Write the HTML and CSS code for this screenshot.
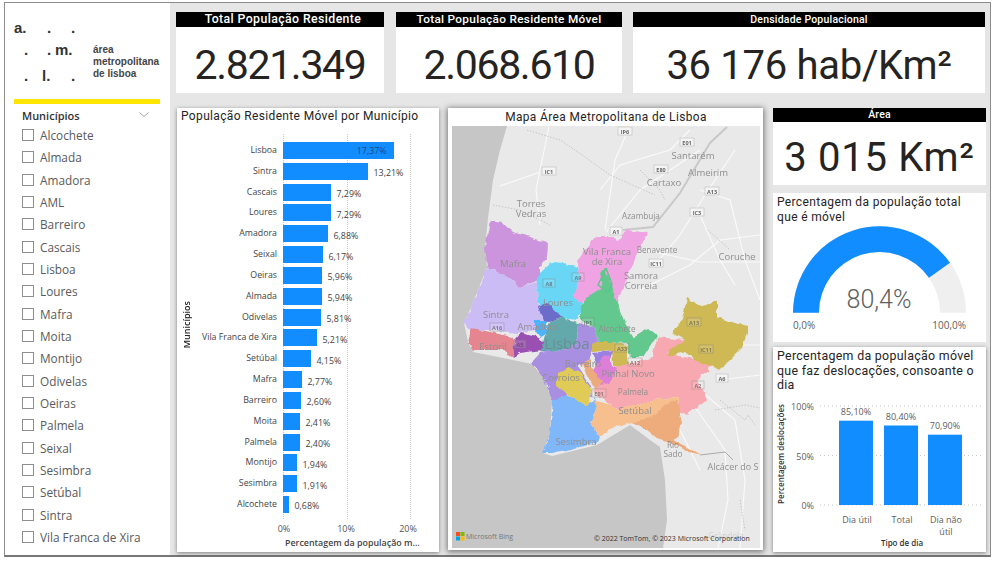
FILE: index.html
```html
<!DOCTYPE html>
<html lang="pt">
<head>
<meta charset="utf-8">
<title>Área Metropolitana de Lisboa</title>
<link rel="stylesheet" href="styles.css">
</head>
<body>
<div class="frame">
  <aside class="side">
    <div class="logo">
      <div class="logo-marks">
        <div class="lrow r1"><b class="a">a.</b><b class="d1">.</b><b class="d2">.</b></div>
        <div class="lrow r2"><b class="d0">.</b><b class="d1">.</b><b class="m">m.</b></div>
        <div class="lrow r3"><b class="d0">.</b><b class="l">l.</b><b class="d2">.</b></div>
      </div>
      <div class="logo-text">área<br>metropolitana<br>de lisboa</div>
    </div>
    <div class="yellow"></div>
    <div class="slicer-head"><span>Municípios</span>
      <svg class="chev" width="10" height="5" viewBox="0 0 10 5"><path d="M.5.5 5 4.5 9.5.5" fill="none" stroke="#888" stroke-width=".8"/></svg>
    </div>
    <ul class="slicer">
      <li><i></i>Alcochete</li><li><i></i>Almada</li><li><i></i>Amadora</li><li><i></i>AML</li>
      <li><i></i>Barreiro</li><li><i></i>Cascais</li><li><i></i>Lisboa</li><li><i></i>Loures</li>
      <li><i></i>Mafra</li><li><i></i>Moita</li><li><i></i>Montijo</li><li><i></i>Odivelas</li>
      <li><i></i>Oeiras</li><li><i></i>Palmela</li><li><i></i>Seixal</li><li><i></i>Sesimbra</li>
      <li><i></i>Setúbal</li><li><i></i>Sintra</li><li><i></i>Vila Franca de Xira</li>
    </ul>
  </aside>
  <main class="main">
    <section class="kpis">
      <div class="kpi k1"><h2 class="kh big">Total População Residente</h2><div class="kv">2.821.349</div></div>
      <div class="kpi k2"><h2 class="kh big">Total População Residente Móvel</h2><div class="kv">2.068.610</div></div>
      <div class="kpi k3"><h2 class="kh">Densidade Populacional</h2><div class="kv wide">36 176 hab/Km²</div></div>
    </section>
    <section class="content">
      <div class="card chart">
        <h3 class="title">População Residente Móvel por Município</h3>
        <div class="ytitle">Municípios</div>
        <div class="plot">
          <span class="gl g0"></span><span class="gl g1"></span><span class="gl g2"></span>
          <div class="row"><span class="cat">Lisboa</span><span class="bar" style="width:110.7px"><em>17,37%</em></span></div>
          <div class="row"><span class="cat">Sintra</span><span class="bar" style="width:84.5px"></span><span class="val">13,21%</span></div>
          <div class="row"><span class="cat">Cascais</span><span class="bar" style="width:47.5px"></span><span class="val">7,29%</span></div>
          <div class="row"><span class="cat">Loures</span><span class="bar" style="width:47.5px"></span><span class="val">7,29%</span></div>
          <div class="row"><span class="cat">Amadora</span><span class="bar" style="width:44.5px"></span><span class="val">6,88%</span></div>
          <div class="row"><span class="cat">Seixal</span><span class="bar" style="width:39.5px"></span><span class="val">6,17%</span></div>
          <div class="row"><span class="cat">Oeiras</span><span class="bar" style="width:38.5px"></span><span class="val">5,96%</span></div>
          <div class="row"><span class="cat">Almada</span><span class="bar" style="width:38.5px"></span><span class="val">5,94%</span></div>
          <div class="row"><span class="cat">Odivelas</span><span class="bar" style="width:37.5px"></span><span class="val">5,81%</span></div>
          <div class="row"><span class="cat">Vila Franca de Xira</span><span class="bar" style="width:33.5px"></span><span class="val">5,21%</span></div>
          <div class="row"><span class="cat">Setúbal</span><span class="bar" style="width:27.5px"></span><span class="val">4,15%</span></div>
          <div class="row"><span class="cat">Mafra</span><span class="bar" style="width:18.5px"></span><span class="val">2,77%</span></div>
          <div class="row"><span class="cat">Barreiro</span><span class="bar" style="width:17.5px"></span><span class="val">2,60%</span></div>
          <div class="row"><span class="cat">Moita</span><span class="bar" style="width:16.5px"></span><span class="val">2,41%</span></div>
          <div class="row"><span class="cat">Palmela</span><span class="bar" style="width:16.5px"></span><span class="val">2,40%</span></div>
          <div class="row"><span class="cat">Montijo</span><span class="bar" style="width:13.5px"></span><span class="val">1,94%</span></div>
          <div class="row"><span class="cat">Sesimbra</span><span class="bar" style="width:13.5px"></span><span class="val">1,91%</span></div>
          <div class="row"><span class="cat">Alcochete</span><span class="bar" style="width:5.5px"></span><span class="val">0,68%</span></div>
        </div>
        <div class="xticks"><span>0%</span><span>10%</span><span>20%</span></div>
        <div class="xtitle">Percentagem da população m...</div>
      </div>

      <div class="card mapcard">
        <h3 class="maptitle">Mapa Área Metropolitana de Lisboa</h3>
        <svg class="map" width="308" height="422" viewBox="452 126 308 422">
          <defs>
            <filter id="rough" x="452" y="126" width="308" height="422" filterUnits="userSpaceOnUse">
              <feTurbulence type="fractalNoise" baseFrequency=".13" numOctaves="2" seed="4" result="n"/>
              <feDisplacementMap in="SourceGraphic" in2="n" scale="5" xChannelSelector="R" yChannelSelector="G"/>
              <feGaussianBlur stdDeviation=".35"/>
            </filter>
            <filter id="soft" x="452" y="126" width="308" height="422" filterUnits="userSpaceOnUse">
              <feGaussianBlur stdDeviation=".3"/>
            </filter>
          </defs>
          <rect x="452" y="126" width="308" height="422" fill="#e9e9e9"/>
          <path d="M452 126H507L500 150 493 180 488 218 485 247 487 267 473 303 464 323 468 342 473 352 513 360 532 364 543 377 552 400 550 433 543 453 552 456 597 445 630 425 650 440 660 447 665 480 667 520 663 548H452Z" fill="#c6c6c6" filter="url(#soft)"/>
          <g fill="none" stroke="#fafafa" stroke-width="1.1" filter="url(#soft)">
            <path d="M549 127 540 170 536 190 540 225"/><path d="M630 126 615 160 605 230"/>
            <path d="M540 172 500 186"/><path d="M600 190 620 165 670 150 690 130"/>
            <path d="M606 232 640 190 700 150"/><path d="M655 265 680 235 705 195 735 150"/>
            <path d="M640 290 690 265 720 240 760 235"/><path d="M700 215 720 260 735 285"/>
            <path d="M700 190 730 200 745 260 760 300"/><path d="M645 250 700 262 760 262"/>
            <path d="M700 390 735 420 745 480 740 548"/><path d="M720 380 760 375"/><path d="M690 400 725 450 728 500 718 548"/>
            <path d="M675 420 700 470"/><path d="M700 345 760 345"/>
          </g>
          <g fill="none" stroke="#bcbcbc" stroke-width=".8" stroke-dasharray="1.5 1.5">
            <path d="M527 130 560 140 575 150 610 175 655 195"/><path d="M493 205 520 210 550 225"/>
            <path d="M640 170 660 190 665 200"/><path d="M708 230 730 250"/><path d="M715 410 745 405 760 408"/>
            <path d="M720 400 745 420 748 415 755 425"/><path d="M740 500 745 530"/>
          </g>
          <path d="M623 230 653 227 680 193 710 143 727 127" fill="none" stroke="#c8c8c8" stroke-width="2" filter="url(#soft)"/>
          <path d="M700 455 725 452 733 460" fill="none" stroke="#aaa" stroke-width="1"/>

          <g filter="url(#rough)">
          <path fill="#cb94dd" d="M490 220 502 222 512 232 530 237 548 243 547 258 540 267 540 280 520 287 507 277 487 267 485 247Z"/>
          <path fill="#cbbcf6" d="M487 267 507 277 520 287 537 282 538 303 543 320 535 330 517 333 490 330 470 330 464 323 473 303Z"/>
          <path fill="#6ad6f5" d="M540 273 552 262 563 263 578 268 580 277 573 297 583 303 578 320 550 317 538 303 537 282Z"/>
          <path fill="#f0a3e2" d="M577 260 595 237 612 237 619 240 627 230 648 233 637 253 617 303 605 295 582 303 573 297 580 277Z"/>
          <path fill="#62c88e" d="M603 287 600 272 605 268 608 276 617 303 625 323 633 337 648 328 657 335 643 357 630 357 627 343 600 342 593 327 580 320 580 310 587 297Z"/>
          <path fill="#4db3ff" d="M535 320 547 320 547 333 540 337 535 330Z"/>
          <path fill="#6c6ccb" d="M538 307 547 303 562 317 550 323 543 320Z"/>
          <path fill="#64a9ab" d="M540 352 545 335 550 323 562 317 567 320 578 323 577 343 567 348 547 352Z"/>
          <path fill="#e4858f" d="M468 342 472 328 490 332 512 337 514 340 513 358 503 350 473 350Z"/>
          <path fill="#9a4fb2" d="M513 358 514 340 520 333 537 337 545 342 542 350 520 353Z"/>
          <path fill="#a98fe2" d="M532 362 540 353 567 348 577 343 578 323 593 327 600 342 592 350 587 362 577 365 580 370 590 385 592 397 568 395 560 400 552 400 543 377Z"/>
          <path fill="#80b7fa" d="M553 400 567 395 577 400 587 407 595 397 597 407 590 423 600 437 597 443 552 453 543 453 550 433Z"/>
          <path fill="#dfcb56" d="M557 373 568 367 580 373 587 383 592 390 590 403 587 407 580 402 568 395 557 387Z"/>
          <path fill="#f8a8b0" d="M593 392 600 383 613 367 630 363 652 358 657 337 685 340 683 350 667 353 697 360 713 365 697 380 707 400 687 415 678 410 678 397 653 400 618 410 603 400Z"/>
          <path fill="#f6bf8d" d="M593 400 610 405 618 410 653 400 678 397 677 410 682 423 678 437 673 440 702 455 690 452 673 443 657 438 647 430 632 423 613 427 600 437 590 423 597 407Z"/>
          <path fill="#eeac7c" d="M632 423 650 418 665 405 677 400 682 423 678 437 673 440 700 454 690 452 673 443 657 438 647 430Z"/>
          <path fill="#cfb954" d="M687 298 703 307 717 300 717 317 747 327 747 333 742 348 720 370 695 360 685 352 667 357 670 350 685 340 673 333 675 327 682 320Z"/>
          <path fill="#cfb954" d="M592 345 597 342 613 342 628 345 628 365 613 365 612 350 592 352Z"/>
          <path fill="#9a80e0" d="M592 353 613 350 610 360 597 367Z"/>
          <path fill="#dd7fd8" d="M593 370 603 357 610 355 612 365 617 368 610 383 600 385 592 370Z"/>
          <path fill="#ecab7c" d="M583 363 590 358 593 370 602 382 595 390 587 375Z"/>
          </g>
          <path fill="none" stroke="#5cc589" stroke-width="1.4" d="M606 268 598 285 608 292 612 284 606 268"/>

          <g class="lb" filter="url(#soft)">
            <text x="693" y="159">Santarém</text><text x="708" y="176">Almeirim</text><text x="664" y="186">Cartaxo</text>
            <text x="531" y="207">Torres</text><text x="531" y="217">Vedras</text><text class="s" x="641" y="219">Azambuja</text>
            <text class="s" x="657" y="253">Benavente</text><text x="737" y="260">Coruche</text>
            <text x="607" y="255">Vila Franca</text><text x="607" y="265">de Xira</text><text x="641" y="279">Samora</text><text x="641" y="289">Correia</text>
            <text x="513" y="267">Mafra</text><text x="558" y="306">Loures</text><text x="496" y="318">Sintra</text><text x="538" y="330">Amadora</text>
            <text class="s" x="617" y="332">Alcochete</text><text x="493" y="350">Estoril</text><text class="lg" x="567" y="349">Lisboa</text>
            <text x="583" y="367">Barreiro</text><text x="561" y="381">Corroios</text><text x="628" y="377">Pinhal Novo</text>
            <text class="s" x="633" y="395">Palmela</text><text x="635" y="414">Setúbal</text><text x="576" y="445">Sesimbra</text>
            <text class="s" x="673" y="448">Rio</text><text class="s" x="673" y="457">Sado</text><text class="c" x="733" y="470">Alcácer do S</text>
            <text class="s faint" x="726" y="539">Grândola</text>
          </g>
          <g class="rd" filter="url(#soft)">
            <g transform="translate(625 131)"><rect x="-7" y="-4" width="14" height="8"/><text y="2.5">IP6</text></g>
            <g transform="translate(687 142)"><rect x="-7" y="-4" width="14" height="8"/><text y="2.5">E01</text></g>
            <g transform="translate(549 171)"><rect x="-7" y="-4" width="14" height="8"/><text y="2.5">IC1</text></g>
            <g transform="translate(661 169)"><rect x="-7" y="-4" width="14" height="8"/><text y="2.5">E80</text></g>
            <g transform="translate(712 191)"><rect x="-7" y="-4" width="14" height="8"/><text y="2.5">A13</text></g>
            <g transform="translate(697 212)"><rect x="-7" y="-4" width="14" height="8"/><text y="2.5">IC3</text></g>
            <g transform="translate(616 231)"><rect x="-6" y="-4" width="12" height="8"/><text y="2.5">A1</text></g>
            <g transform="translate(656 263)"><rect x="-7" y="-4" width="14" height="8"/><text y="2.5">IC11</text></g>
            <g class="t" transform="translate(578 277)"><rect x="-6" y="-4" width="12" height="8"/><text y="2.5">A9</text></g>
            <g class="t" transform="translate(549 283)"><rect x="-6" y="-4" width="12" height="8"/><text y="2.5">A8</text></g>
            <g class="t" transform="translate(588 322)"><rect x="-6" y="-4" width="12" height="8"/><text y="2.5">IP1</text></g>
            <g class="t" transform="translate(497 327)"><rect x="-7" y="-4" width="14" height="8"/><text y="2.5">A16</text></g>
            <g class="t" transform="translate(694 322)"><rect x="-7" y="-4" width="14" height="8"/><text y="2.5">A13</text></g>
            <g class="t" transform="translate(520 344)"><rect x="-6" y="-4" width="12" height="8"/><text y="2.5">A5</text></g>
            <g class="t" transform="translate(622 348)"><rect x="-7" y="-4" width="14" height="8"/><text y="2.5">A33</text></g>
            <g class="t" transform="translate(635 362)"><rect x="-7" y="-4" width="14" height="8"/><text y="2.5">A12</text></g>
            <g class="t" transform="translate(706 349)"><rect x="-7" y="-4" width="14" height="8"/><text y="2.5">IC11</text></g>
            <g transform="translate(722 378)"><rect x="-6" y="-4" width="12" height="8"/><text y="2.5">A6</text></g>
            <g class="t" transform="translate(698 385)"><rect x="-6" y="-4" width="12" height="8"/><text y="2.5">A2</text></g>
            <g class="t" transform="translate(599 393)"><rect x="-7" y="-4" width="14" height="8"/><text y="2.5">E01</text></g>
          </g>
          <rect x="456" y="532" width="4" height="4" fill="#f25022"/><rect x="460.500" y="532" width="4" height="4" fill="#7fba00"/>
          <rect x="456" y="536.500" width="4" height="4" fill="#00a4ef"/><rect x="460.500" y="536.500" width="4" height="4" fill="#ffb900"/>
          <text class="bing" x="466" y="539">Microsoft Bing</text>
          <text class="copy" x="594" y="541">© 2022 TomTom, © 2023 Microsoft Corporation</text>
        </svg>
      </div>

      <div class="rightcol">
        <div class="kpi area"><h2 class="kh">Área</h2><div class="kv small">3 015 Km²</div></div>
        <div class="card gauge">
          <h3 class="title t2">Percentagem da população total que é móvel</h3>
          <svg class="gsvg" width="213" height="118" viewBox="773 224 213 118">
            <path d="M793 312.700A86.500 86.500 0 0 1 966 312.700H940A60.500 60.500 0 0 0 819 312.700Z" fill="#efefef"/>
            <path d="M793 312.700A86.500 86.500 0 0 1 950 262.700L929 277.700A60.500 60.500 0 0 0 819 312.700Z" fill="#118dff"/>
            <text class="gv" x="879" y="308">80,4%</text>
            <text class="gl0" x="793" y="329">0,0%</text>
            <text class="gl1" x="966" y="329">100,0%</text>
          </svg>
        </div>
        <div class="card cols">
          <h3 class="title t3">Percentagem da população móvel que faz deslocações, consoante o dia</h3>
          <svg class="csvg" width="213" height="154" viewBox="773 398 213 154">
            <g stroke="#c8c8c8" stroke-width="1" stroke-dasharray="1 3">
              <path d="M820 406H982M820 455.500H982M820 505H982"/>
            </g>
            <rect x="839" y="420.700" width="34" height="84.300" fill="#118dff"/>
            <rect x="884" y="425.500" width="34" height="79.500" fill="#118dff"/>
            <rect x="928" y="434.700" width="34" height="70.300" fill="#118dff"/>
            <g class="ct">
              <text class="e" x="814" y="410">100%</text><text class="e" x="814" y="460">50%</text><text class="e" x="814" y="509">0%</text>
              <text x="856" y="415">85,10%</text><text x="901" y="420">80,40%</text><text x="945" y="429">70,90%</text>
              <text x="857" y="523">Dia útil</text><text x="902" y="523">Total</text><text x="946" y="523">Dia não</text><text x="946" y="535">útil</text>
            </g>
            <text class="cb" x="902" y="546">Tipo de dia</text>
            <text class="cb" transform="translate(784 454) rotate(-90)" x="0" y="0">Percentagem deslocações</text>
          </svg>
        </div>
      </div>
    </section>
  </main>
</div>
</body>
</html>
```
FILE: styles.css
```css
* { box-sizing: border-box; }
html, body { margin: 0; padding: 0; background: #fff; }
body { width: 995px; height: 562px; overflow: hidden; font-family: "Open Sans", sans-serif; }
h2, h3, ul { margin: 0; padding: 0; font-weight: normal; }
.frame { margin: 2px 0 0 4px; width: 987px; height: 555px; border: 1px solid #8c8c8c; border-bottom: 2px solid #777; background: #e6e6e6; display: flex; }
.side { width: 165px; background: #fff; display: flex; flex-direction: column; padding: 0 0 0 9px; flex: none; }

.logo { height: 93px; display: flex; padding-top: 16px; }
.logo-marks { width: 79px; font-family: "Liberation Sans", sans-serif; color: #333; }
.lrow { position: relative; height: 23px; font-size: 15px; }
.lrow b { position: absolute; top: 0; }
.r2 { height: 24px; top: -1px; }
.r3 { top: 1px; }
.a { left: 0; }
.d0 { left: 10px; }
.d1 { left: 33px; }
.d2 { left: 57px; }
.m { left: 41px; }
.l { left: 28px; }
.logo-text { font: bold 10px/12px "Liberation Sans", sans-serif; color: #444; margin-top: 25px; }
.yellow { width: 146px; height: 5px; background: #ffe600; margin-top: 3px; flex: none; }
.slicer-head { display: flex; justify-content: space-between; align-items: center; width: 136px; margin: 4px 0 0 8px; height: 15px; font-size: 11px; font-weight: 600; color: #333; }
.chev { margin-right: 9px; margin-top: -3px; }
.slicer { list-style: none; margin: 1px 0 0 8px; }
.slicer li { display: flex; align-items: center; gap: 6px; height: 22.330px; font-size: 11.800px; color: #5a5a5a; }
.slicer i { width: 12px; height: 12px; border: 1px solid #8f8f8f; flex: none; }

.main { flex: 1; padding: 9px 0 0 6px; display: flex; flex-direction: column; }
.kpis { display: flex; height: 81px; }
.kpi { background: #fff; display: flex; flex-direction: column; }
.k1 { width: 208px; margin-right: 12px; }
.k2 { width: 226px; margin-right: 11px; }
.k3 { width: 352px; }
.kh { background: #000; color: #fff; height: 15px; text-align: center; font: 500 10.500px/15px Roboto, sans-serif; letter-spacing: .2px; flex: none; }
.kh.big { font-size: 12.300px; letter-spacing: .4px; }
.k1 .kh.big { padding-left: 6px; }
.k2 .kh.big { font-size: 11.800px; letter-spacing: .3px; }
.kv { flex: 1; display: flex; align-items: center; justify-content: center; font: 400 41px/1 Roboto, sans-serif; color: #252423; padding-top: 11px; letter-spacing: -1.300px; }
.kv.wide { font-size: 40px; letter-spacing: -.3px; }
.kv.small { font-size: 40px; padding-top: 9px; letter-spacing: .7px; }

.content { display: flex; margin-top: 15px; height: 444px; }
.card { background: #fff; box-shadow: 0 1px 4px rgba(0,0,0,.45); position: relative; }
.title { font: 400 12px/15px Roboto, sans-serif; color: #252423; letter-spacing: .35px; }

.chart { width: 262px; height: 444px; margin-left: 1px; padding: 0 0 0 4px; }
.chart .title { padding-top: 1px; height: 32px; }
.ytitle { position: absolute; left: 3px; top: 193px; writing-mode: vertical-rl; transform: rotate(180deg); font-size: 9px; font-weight: 600; color: #252423; }
.plot { position: relative; margin-left: -4px; }
.gl { position: absolute; top: -6px; height: 385px; border-left: 1px dotted #c8c8c8; }
.g0 { left: 106px; } .g1 { left: 170px; } .g2 { left: 233px; }
.row { position: relative; display: flex; align-items: center; height: 20.840px; }
.cat { width: 100px; margin-right: 6px; text-align: right; font-size: 8.800px; color: #444; white-space: nowrap; flex: none; margin-top: -1px; }
.bar { height: 17px; background: #118dff; display: flex; justify-content: flex-end; align-items: center; flex: none; }
.bar em { font-style: normal; font-size: 8.900px; color: #1b4a7a; margin-right: 7px; }
.val { margin-left: 6px; font-size: 8.900px; color: #444; margin-top: 3px; }
.xticks { display: flex; margin: 7px 0 0 72px; font-size: 9px; color: #555; }
.xticks span { width: 63.500px; text-align: center; }
.xtitle { margin: 1px 0 0 104px; font-size: 8.900px; font-weight: 600; color: #444; white-space: nowrap; }

.mapcard { width: 315px; height: 442px; margin-left: 9px; padding: 0 3px 2px 4px; display: flex; flex-direction: column; box-shadow: 0 1px 6px 1px rgba(0,0,0,.5); }
.maptitle { font: 400 11.900px/18px Roboto, sans-serif; color: #252423; text-align: center; letter-spacing: .4px; height: 18px; flex: none; }
.map { display: block; flex: none; }
.lb text { font: 9.500px "Open Sans", sans-serif; fill: #8f8f8f; text-anchor: middle; }
.lb text.s { font-size: 8.200px; }
.lb text.c { font-size: 9px; }
.lb text.lg { font-size: 15px; fill: #6d8c96; }
.lb text.faint { fill: #cfcfcf; }
.rd rect { fill: #f4f4f4; stroke: #c4c4c4; stroke-width: .7; }
.rd text { font: bold 5.500px "Open Sans", sans-serif; fill: #666; text-anchor: middle; }
.rd .t rect { fill: rgba(255,255,255,.12); stroke: rgba(120,120,120,.5); }
.rd .t text { fill: rgba(70,70,70,.6); }
.bing { font: 7px "Open Sans", sans-serif; fill: #777; }
.copy { font: 7px "Open Sans", sans-serif; fill: #333; }

.rightcol { width: 213px; margin-left: 10px; display: flex; flex-direction: column; }
.area { height: 77px; flex: none; }
.area .kh { height: 14px; line-height: 14px; }
.gauge { height: 149px; margin-top: 8px; box-shadow: none; flex: none; }
.t2 { padding: 2px 4px 0; height: 31px; }
.gsvg { display: block; }
.gv { font: 300 25px Roboto, sans-serif; fill: #605e5c; text-anchor: middle; }
.gl0 { font: 10px "Open Sans", sans-serif; fill: #605e5c; }
.gl1 { font: 10px "Open Sans", sans-serif; fill: #605e5c; text-anchor: end; }
.cols { height: 205px; margin-top: 5px; flex: none; }
.t3 { padding: 2px 0 0 4px; height: 51px; font-size: 12.400px; line-height: 14.500px; letter-spacing: .3px; }
.csvg { display: block; }
.ct text { font: 9px "Open Sans", sans-serif; fill: #605e5c; text-anchor: middle; }
.ct text.e { text-anchor: end; }
.cb { font: 600 8px "Open Sans", sans-serif; fill: #333; text-anchor: middle; }
```
